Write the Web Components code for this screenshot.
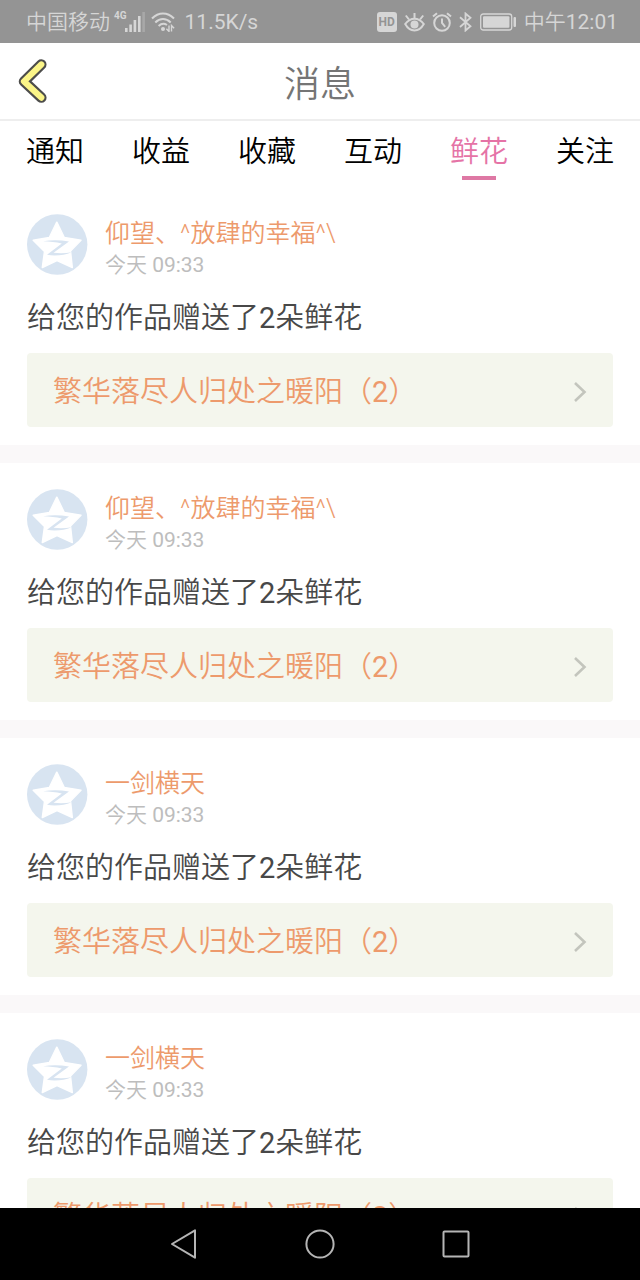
<!DOCTYPE html>
<html lang="zh-CN">
<head>
<meta charset="utf-8">
<meta name="viewport" content="width=device-width, initial-scale=1">
<title>消息</title>
<style>
  html, body {
    height: 100%;
    margin: 0;
  }
  body {
    background: #fff;
    font-family: Roboto, 'Noto Sans CJK SC', sans-serif;
    font-weight: 350;
  }
</style>
</head>
<body>
<message-app></message-app>

<script>
/**
 * status-bar element
 */
class StatusBar extends HTMLElement {
  constructor() {
    super();
    this.attachShadow({ mode: 'open' });
    this.shadowRoot.innerHTML = `
      <style>
        :host {
          align-items: center;
          background: #949494;
          box-sizing: border-box;
          color: #d6d6d6;
          display: flex;
          flex: none;
          font-size: 21px;
          height: 43px;
          justify-content: space-between;
          line-height: 43px;
          padding: 1px 22px 0 26px;
          white-space: nowrap;
        }
        .side {
          align-items: center;
          display: flex;
          height: 42px;
        }
        .num {
          font-weight: 400;
        }
        .net {
          align-self: flex-start;
          font-size: 10px;
          font-weight: 700;
          line-height: 16px;
          padding: 7px 0 0 4px;
        }
        .signal {
          margin-left: -2px;
        }
        .wifi {
          margin: 0 10px 0 6px;
        }
        .icons {
          gap: 7px;
        }
        .hd {
          background: #d6d6d6;
          border-radius: 3px;
          color: #949494;
          font-size: 12px;
          font-weight: 700;
          height: 20px;
          line-height: 20px;
          text-align: center;
          width: 20px;
        }
      </style>
      <div class="side">
        <span>中国移动</span>
        <span class="net">4G</span>
        <svg class="signal" width="20" height="20" viewBox="0 0 20 20" fill="#d6d6d6">
          <rect x="0" y="16" width="2.6" height="4"/>
          <rect x="4.3" y="12.500" width="2.6" height="7.500"/>
          <rect x="8.600" y="8" width="2.6" height="12"/>
          <rect x="13" y="4" width="2.6" height="16"/>
          <rect x="17.300" y="0" width="2.6" height="20" opacity=".3"/>
        </svg>
        <svg class="wifi" width="24" height="20" viewBox="0 0 24 20" fill="none" stroke="#d6d6d6" stroke-width="2">
          <path d="M1 6.500C7.500-.3 16.500-.3 23 6.500"/>
          <path d="M4.300 10.500c4.700-4.600 10.700-4.600 15.400 0"/>
          <path d="M7.600 14c2.700-2.500 5.500-2.900 8.400-1"/>
          <circle cx="12" cy="17" r="2" fill="#d6d6d6" stroke="none"/>
          <path d="M18 13.500v6l-2.600-2.700M20.500 19.500v-6l2.600 2.700" stroke-width="1.400"/>
        </svg>
        <span class="num">11.5K/s</span>
      </div>
      <div class="side icons">
        <span class="hd">HD</span>
        <svg width="21" height="20" viewBox="0 0 21 20" fill="none" stroke="#d6d6d6" stroke-width="2">
          <path d="M1.200 12C6.500 5 14.500 5 19.800 12 15 20.600 6 20.600 1.200 12z"/>
          <circle cx="10.500" cy="12.500" r="4" fill="#d6d6d6" stroke="none"/>
          <path d="M10.500 6V1M5 7.500 1.800 3.500M16 7.500l3.200-4"/>
        </svg>
        <svg width="20" height="20" viewBox="0 0 20 20" fill="none" stroke="#d6d6d6" stroke-width="2">
          <circle cx="10" cy="11" r="7.800"/>
          <path d="M10 6.500V11l3.200 3.800M1 4.600 5 1.200M19 4.600l-4-3.400"/>
        </svg>
        <svg width="13" height="20" viewBox="0 0 13 20" fill="none" stroke="#d6d6d6" stroke-width="1.800">
          <path d="M1 5.200l10.500 9L6.500 18.500V1.500l5 4.300L1 15"/>
        </svg>
        <svg width="38" height="18" viewBox="0 0 38 18">
          <rect x="1.700" y="1" width="31" height="16" rx="2.500" fill="none" stroke="#d6d6d6" stroke-width="1.300"/>
          <rect x="4" y="3.200" width="26.400" height="11.600" rx="1" fill="#d6d6d6"/>
          <rect x="34.500" y="4" width="2.500" height="10" rx="1" fill="#d6d6d6"/>
        </svg>
        <span>中午<span class="num">12:01</span></span>
      </div>
    `;
  }
}

/**
 * title-bar element, the slot takes the page title
 */
class TitleBar extends HTMLElement {
  constructor() {
    super();
    this.attachShadow({ mode: 'open' });
    this.shadowRoot.innerHTML = `
      <style>
        :host {
          align-items: center;
          border-bottom: 2px solid #eee;
          box-sizing: border-box;
          display: grid;
          flex: none;
          grid-template-columns: 64px 1fr 64px;
          height: 78px;
        }
        button {
          background: none;
          border: none;
          cursor: pointer;
          height: 76px;
          padding: 0 0 0 18px;
          text-align: left;
        }
        svg {
          display: block;
        }
        h1 {
          color: #757575;
          font-size: 36px;
          font-weight: 350;
          line-height: 68px;
          margin: 0;
          padding-top: 8px;
          text-align: center;
        }
      </style>
      <button type="button" aria-label="返回">
        <svg width="30" height="44" viewBox="0 0 30 44" fill="none" stroke-linecap="round" stroke-linejoin="round">
          <path d="M23.300 5.500 6 22.400l17.300 16.200" stroke="#4d4d4b" stroke-width="10.500"/>
          <path d="M23.300 5.500 6 22.400l17.300 16.200" stroke="#fbf588" stroke-width="6.200"/>
        </svg>
      </button>
      <h1><slot></slot></h1>
    `;
  }
}

/**
 * tab-strip element, slotted buttons are the tabs
 */
class TabStrip extends HTMLElement {
  constructor() {
    super();
    this.attachShadow({ mode: 'open' });
    this.shadowRoot.innerHTML = `
      <style>
        :host {
          display: block;
          flex: none;
        }
        nav {
          align-items: flex-start;
          display: flex;
          height: 67px;
          padding: 0 2px;
        }
        ::slotted(button) {
          background: none;
          border: none;
          color: #000;
          cursor: pointer;
          flex: 1;
          font: inherit;
          font-size: 29px;
          line-height: 40px;
          padding: 11px 0 0;
        }
      </style>
      <nav><slot></slot></nav>
    `;
    this.addEventListener('click', e => {
      const tab = e.target.closest('button');
      if (!tab) return;
      this.querySelectorAll('button').forEach(b => b.removeAttribute('aria-current'));
      tab.setAttribute('aria-current', 'page');
    });
  }
}

/**
 * user-avatar element
 */
class UserAvatar extends HTMLElement {
  constructor() {
    super();
    this.attachShadow({ mode: 'open' });
    this.shadowRoot.innerHTML = `
      <style>
        :host {
          display: block;
          flex: none;
          height: 61px;
          width: 61px;
        }
        svg {
          display: block;
        }
      </style>
      <svg width="61" height="61" viewBox="0 0 61 61">
        <circle cx="30.200" cy="30.500" r="30.200" fill="#d8e4f1"/>
        <path d="M29.800 8.200 37.300 23.500 54 26.200 43.500 37 45.300 53.500 30 46.500 15.300 53.500 17.500 37.500 6.200 26.200 22.300 23.500z" fill="#fff" stroke="#fff" stroke-width="1.500" stroke-linejoin="round"/>
        <path d="M16 27.300c9-1.400 17-1.200 26 .2L26.500 38.800c7 .8 12.500.5 18-.6-7 3-16 4-24.500 2.600L34.800 29.500c-6-1.300-12-2-18.800-2.200z" fill="#d8e4f1"/>
      </svg>
    `;
  }
}

/**
 * flower-card element
 * slots: name, time, (default) message, work
 */
class FlowerCard extends HTMLElement {
  constructor() {
    super();
    this.attachShadow({ mode: 'open' });
    this.shadowRoot.innerHTML = `
      <style>
        :host {
          background: #fff;
          border-bottom: 18px solid #faf8f9;
          display: block;
          padding: 26px 27px 18px;
        }
        header {
          display: flex;
          gap: 17px;
        }
        .meta {
          padding-top: 4px;
        }
        .name {
          color: #ed9a6c;
          font-size: 25px;
          line-height: 32px;
        }
        .time {
          color: #bdbdbd;
          font-size: 21px;
          line-height: 30px;
        }
        p {
          color: #484848;
          font-size: 29px;
          line-height: 40px;
          margin: 18px 0 15px;
        }
        a {
          align-items: center;
          background: #f4f6ed;
          border-radius: 4px;
          color: #ed9a6c;
          display: flex;
          font-size: 29px;
          justify-content: space-between;
          line-height: 70px;
          padding: 4px 26px 0;
          text-decoration: none;
        }
      </style>
      <header>
        <user-avatar></user-avatar>
        <div class="meta">
          <div class="name"><slot name="name"></slot></div>
          <div class="time"><slot name="time"></slot></div>
        </div>
      </header>
      <p><slot></slot></p>
      <a href="#">
        <slot name="work"></slot>
        <svg width="14" height="22" viewBox="0 0 14 22" fill="none" stroke="#c3c5bd" stroke-width="2.600">
          <path d="M2 2l9.500 9L2 20"/>
        </svg>
      </a>
    `;
  }
}

/**
 * system-nav element
 */
class SystemNav extends HTMLElement {
  constructor() {
    super();
    this.attachShadow({ mode: 'open' });
    this.shadowRoot.innerHTML = `
      <style>
        :host {
          background: #000;
          display: flex;
          flex: none;
          height: 72px;
          justify-content: center;
        }
        button {
          align-items: center;
          background: none;
          border: none;
          cursor: pointer;
          display: flex;
          justify-content: center;
          padding: 0;
          width: 136px;
        }
      </style>
      <button type="button" aria-label="返回">
        <svg width="30" height="32" viewBox="0 0 30 32" fill="none" stroke="#b5b5b5" stroke-width="2" stroke-linejoin="round">
          <path d="M26 2.300v27.400L3 16z"/>
        </svg>
      </button>
      <button type="button" aria-label="主屏幕">
        <svg width="32" height="32" viewBox="0 0 32 32" fill="none" stroke="#b5b5b5" stroke-width="2">
          <circle cx="16" cy="16" r="13.600"/>
        </svg>
      </button>
      <button type="button" aria-label="最近任务">
        <svg width="28" height="28" viewBox="0 0 28 28" fill="none" stroke="#b5b5b5" stroke-width="2">
          <rect x="1.500" y="1.500" width="25" height="25" rx="1"/>
        </svg>
      </button>
    `;
  }
}

/**
 * message-app element, puts the whole screen together
 */
class MessageApp extends HTMLElement {
  constructor() {
    super();
    this.attachShadow({ mode: 'open' });

    const tabs = ['通知', '收益', '收藏', '互动', '鲜花', '关注'];
    const names = ['仰望、^放肆的幸福^\\', '仰望、^放肆的幸福^\\', '一剑横天', '一剑横天'];

    this.shadowRoot.innerHTML = `
      <style>
        :host {
          display: flex;
          flex-direction: column;
          height: 100%;
        }
        main {
          flex: 1;
          min-height: 0;
          overflow-y: auto;
          scrollbar-width: none;
        }
        .num {
          font-weight: 400;
        }
        tab-strip button::after {
          background: transparent;
          content: '';
          display: block;
          height: 4px;
          margin: 4px auto 0;
          width: 34px;
        }
        tab-strip button[aria-current] {
          color: #e573a6;
        }
        tab-strip button[aria-current]::after {
          background: #de78a4;
        }
      </style>
      <status-bar></status-bar>
      <title-bar>消息</title-bar>
      <tab-strip>
        ${tabs.map(t => `<button type="button"${t === '鲜花' ? ' aria-current="page"' : ''}>${t}</button>`).join('')}
      </tab-strip>
      <main>
        ${names.map(n => `
          <flower-card>
            <span slot="name">${n}</span>
            <time slot="time">今天 <span class="num">09:33</span></time>
            给您的作品赠送了<span class="num">2</span>朵鲜花
            <span slot="work">繁华落尽人归处之暖阳（<span class="num">2</span>）</span>
          </flower-card>
        `).join('')}
      </main>
      <system-nav></system-nav>
    `;
  }
}

customElements.define('status-bar', StatusBar);
customElements.define('title-bar', TitleBar);
customElements.define('tab-strip', TabStrip);
customElements.define('user-avatar', UserAvatar);
customElements.define('flower-card', FlowerCard);
customElements.define('system-nav', SystemNav);
customElements.define('message-app', MessageApp);
</script>
</body>
</html>
